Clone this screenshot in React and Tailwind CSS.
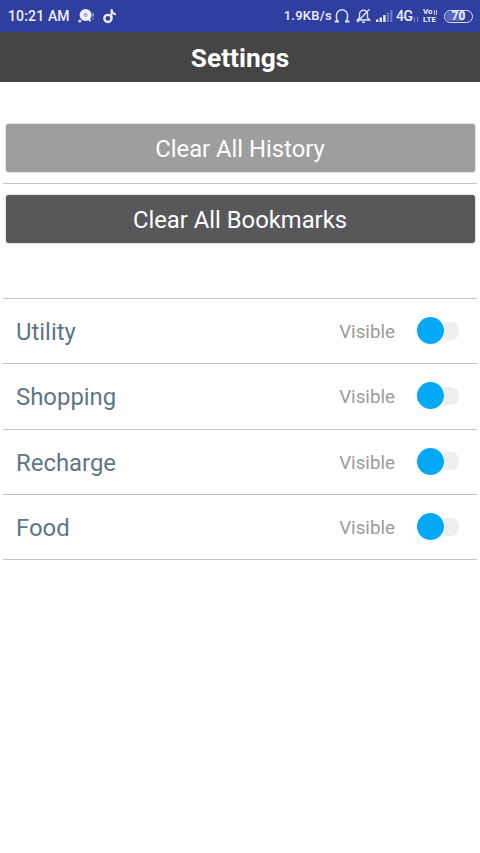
import React, { useState } from "react";
import clsx from "clsx";

const CATEGORIES = ["Utility", "Shopping", "Recharge", "Food"];

// --- Status bar icons ---
const ChatIcon = () => (
  <svg width="17" height="16" viewBox="0 0 17 16" className="ml-2 shrink-0">
    <circle cx="7.6" cy="7" r="6" fill="#eef0ff" />
    <circle cx="7.6" cy="7" r="2" fill="#9299d8" />
    <circle cx="7.6" cy="7" r="0.8" fill="#eef0ff" />
    <circle cx="1.8" cy="13.2" r="1.4" fill="#eef0ff" />
    <path d="M10 10.5l2.5 2.5" stroke="#eef0ff" strokeWidth="1.8" />
    <path d="M15 5v3.6M15 9.8v1.4" stroke="#a9b0e6" strokeWidth="1.3" />
  </svg>
);

const NoteIcon = () => (
  <svg width="14" height="16" viewBox="0 0 14 16" className="ml-2 shrink-0">
    <circle
      cx="4.9"
      cy="10.4"
      r="3.6"
      fill="none"
      stroke="#eef0ff"
      strokeWidth="2.3"
    />
    <path
      d="M8.5 10.5V1.2c.3 2.9 1.8 4.6 4.3 5.4"
      fill="none"
      stroke="#eef0ff"
      strokeWidth="1.9"
    />
  </svg>
);

const HeadphoneIcon = () => (
  <svg
    width="16"
    height="16"
    viewBox="0 0 16 16"
    fill="none"
    stroke="#dfe3ff"
    className="ml-[2px] shrink-0"
  >
    <path
      d="M3.6 13.5C2.8 12 2.4 10.2 2.4 7.4a5.6 5.6 0 0 1 11.2 0c0 2.8-.4 4.6-1.2 6.1"
      strokeWidth="1.5"
    />
    <path d="M.6 13.6H5M11 13.6h4.4" strokeWidth="2" />
  </svg>
);

const BellOffIcon = () => (
  <svg
    width="15"
    height="16"
    viewBox="0 0 15 16"
    fill="none"
    stroke="#dfe3ff"
    strokeWidth="1.4"
    className="ml-[6px] shrink-0"
  >
    <path d="M1.2 12h12.4l-2.1-2.2V6.2a4 4 0 0 0-8 0v3.6z" />
    <path d="M6 14.2h3M13.4 1.2L1.2 14.2" />
  </svg>
);

const SignalIcon = () => (
  <svg width="17" height="12" viewBox="0 0 17 12" className="ml-[5px] shrink-0">
    <path
      d="M0 9.5h2.4V12H0zM3.6 7.5H6V12H3.6zM7.2 5h2.4v7H7.2z"
      fill="#e8ebff"
    />
    <path d="M10.8 2.5h2.2V12h-2.2zM14.2 0h2.2v12h-2.2z" fill="#6d78c6" />
  </svg>
);

const StatusBar = () => (
  <div className="flex h-8 items-center bg-[#303f9f] pl-2 pr-[7px] text-[#eef0ff]">
    <span className="w-[62px] whitespace-nowrap text-[14px] font-medium leading-4 tracking-[0.15px]">
      10:21 AM
    </span>
    <ChatIcon />
    <NoteIcon />
    <span className="ml-auto whitespace-nowrap text-[13px] font-medium leading-4 tracking-[0.25px]">
      1.9KB/s
    </span>
    <HeadphoneIcon />
    <BellOffIcon />
    <SignalIcon />
    <span className="ml-[3px] w-[18px] text-[14px] font-medium leading-4 tracking-[-0.4px]">
      4G
    </span>
    <span className="mt-1.5 flex h-[5px] w-1 shrink-0 justify-between">
      <span className="w-px bg-[#7e88d0]" />
      <span className="w-px bg-[#7e88d0]" />
    </span>
    <span className="ml-[5px] flex w-[16px] shrink-0 flex-col text-[8px] font-bold">
      <span className="flex h-[8px] items-center gap-px leading-[8px]">
        Vo
        <span className="h-[5px] w-px bg-[#c5caf2]" />
        <span className="h-[5px] w-px bg-[#c5caf2]" />
      </span>
      <span className="h-[8px] leading-[8px]">LTE</span>
    </span>
    <span className="ml-[5px] flex h-[13px] w-[29px] shrink-0 items-center justify-center rounded-full border border-[#e0e4ff] p-px">
      <span className="flex h-full w-full items-center justify-center rounded-full bg-linear-to-r from-[#5e69bd] from-70% to-[#303f9f] to-70% text-[12px] font-bold leading-none">
        70
      </span>
    </span>
  </div>
);

const ActionButton = ({ children, className }) => (
  <button
    className={clsx(
      "block w-full rounded-[3px] text-center text-[23.8px] leading-[50px] text-white shadow-[0_0_2px_rgba(0,0,0,0.4)]",
      className
    )}
  >
    {children}
  </button>
);

const CategoryRow = ({ name }) => {
  const [visible, setVisible] = useState(true);

  return (
    <div className="flex h-[65.33px] items-center border-b border-[#c4c4c4] pl-[13px] pr-[18px]">
      <span className="pt-0.5 text-[23.9px] leading-7 text-[#5d7783]">
        {name}
      </span>
      <span className="ml-auto pt-0.5 text-[18.8px] leading-6 text-[#9b9b9b]">
        {visible ? "Visible" : "Hidden"}
      </span>
      <button
        role="switch"
        aria-checked={visible}
        aria-label={name}
        onClick={() => setVisible(!visible)}
        className={clsx(
          "mb-px ml-[22px] flex h-[27px] w-[42px] items-center",
          !visible && "flex-row-reverse"
        )}
      >
        <span className="h-[27px] w-[27px] shrink-0 rounded-full bg-[#03a9f4]" />
        <span
          className={clsx(
            "h-[18px] w-[15px] bg-[#eeeeee]",
            visible ? "rounded-r-lg" : "rounded-l-lg"
          )}
        />
      </button>
    </div>
  );
};

const App = () => (
  <div className="min-h-screen bg-white font-['Roboto',sans-serif]">
    <StatusBar />
    <header className="flex h-[50px] items-center justify-center bg-[#444444] pt-0.5">
      <h1 className="text-[26.3px] font-bold leading-8 text-white">
        Settings
      </h1>
    </header>

    <main className="px-[3px] pt-[42px]">
      {/* Clear actions */}
      <div className="border-b border-[#c4c4c4] px-[2.5px] pb-[11px]">
        <ActionButton className="h-12 bg-[#9e9e9e]">
          Clear All History
        </ActionButton>
      </div>
      <div className="px-[2.5px] pt-[11px]">
        <ActionButton className="h-12 bg-[#58585a]">
          Clear All Bookmarks
        </ActionButton>
      </div>

      {/* Category visibility */}
      <div className="mt-[55px] border-t border-[#c4c4c4]">
        {CATEGORIES.map((name) => (
          <CategoryRow key={name} name={name} />
        ))}
      </div>
    </main>
  </div>
);

export default App;
